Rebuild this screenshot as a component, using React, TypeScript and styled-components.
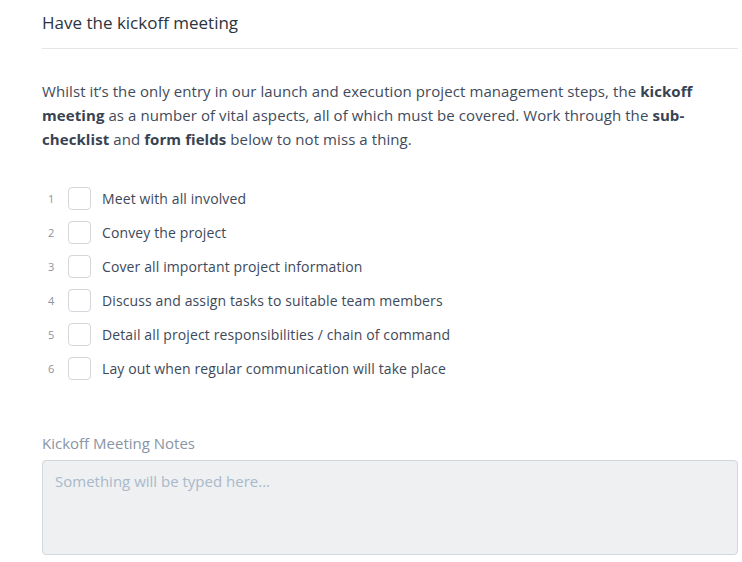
import React from "react";
import styled, { createGlobalStyle } from "styled-components";

const GlobalStyle = createGlobalStyle`
  html, body { margin: 0; padding: 0; background: #ffffff; }
  body { font-family: "Open Sans", "Noto Sans", "Liberation Sans", sans-serif; }
  * { box-sizing: border-box; }
`;

const Page = styled.div`
  padding: 10px 4px 0 42px;
  display: flex;
  flex-direction: column;
`;

const Header = styled.div`
  padding-bottom: 13px;
  border-bottom: 1px solid #e3e5e8;
`;

const Title = styled.h1`
  margin: 0;
  font-size: 17px;
  line-height: 25px;
  font-weight: 400;
  color: #2b3440;
`;

const Intro = styled.p`
  margin: 30px 0 0;
  padding-right: 4px;
  font-size: 15px;
  line-height: 24px;
  color: #3f4b5b;
  letter-spacing: 0.08px;
  strong { font-weight: 700; color: #384352; }
`;

const List = styled.ol`
  list-style: none;
  margin: 36px 0 0;
  padding: 0;
  display: flex;
  flex-direction: column;
  gap: 12px;
`;

const Item = styled.li`
  display: flex;
  align-items: center;
  height: 22px;
`;

const Num = styled.span`
  width: 26px;
  padding-left: 6px;
  font-size: 11px;
  color: #8a94a2;
`;

const Box = styled.span`
  width: 23px;
  height: 23px;
  border: 1px solid #d3d6da;
  border-radius: 4px;
  background: #fff;
  flex: none;
`;

const ItemText = styled.span`
  margin-left: 11px;
  font-size: 14px;
  letter-spacing: 0.12px;
  color: #3d4959;
`;

const Field = styled.div`
  margin-top: 54px;
  display: flex;
  flex-direction: column;
`;

const Label = styled.label`
  font-size: 15px;
  line-height: 20px;
  color: #8895a5;
`;

const Notes = styled.div`
  margin-top: 7px;
  height: 95px;
  border: 1px solid #d3d6da;
  border-radius: 4px;
  background: #eef0f2;
  padding: 10px 12px;
  font-size: 15px;
  color: #a9b9cb;
`;

const items = [
  "Meet with all involved",
  "Convey the project",
  "Cover all important project information",
  "Discuss and assign tasks to suitable team members",
  "Detail all project responsibilities / chain of command",
  "Lay out when regular communication will take place",
];

export default function App() {
  return (
    <>
      <GlobalStyle />
      <Page>
        <Header>
          <Title>Have the kickoff meeting</Title>
        </Header>
        <Intro>
          Whilst it’s the only entry in our launch and execution project management steps, the{" "}
          <strong>kickoff meeting</strong> as a number of vital aspects, all of which must be covered. Work
          through the <strong>sub-checklist</strong> and <strong>form fields</strong> below to not miss a thing.
        </Intro>
        <List>
          {items.map((t, i) => (
            <Item key={i}>
              <Num>{i + 1}</Num>
              <Box />
              <ItemText>{t}</ItemText>
            </Item>
          ))}
        </List>
        <Field>
          <Label>Kickoff Meeting Notes</Label>
          <Notes>Something will be typed here...</Notes>
        </Field>
      </Page>
    </>
  );
}
